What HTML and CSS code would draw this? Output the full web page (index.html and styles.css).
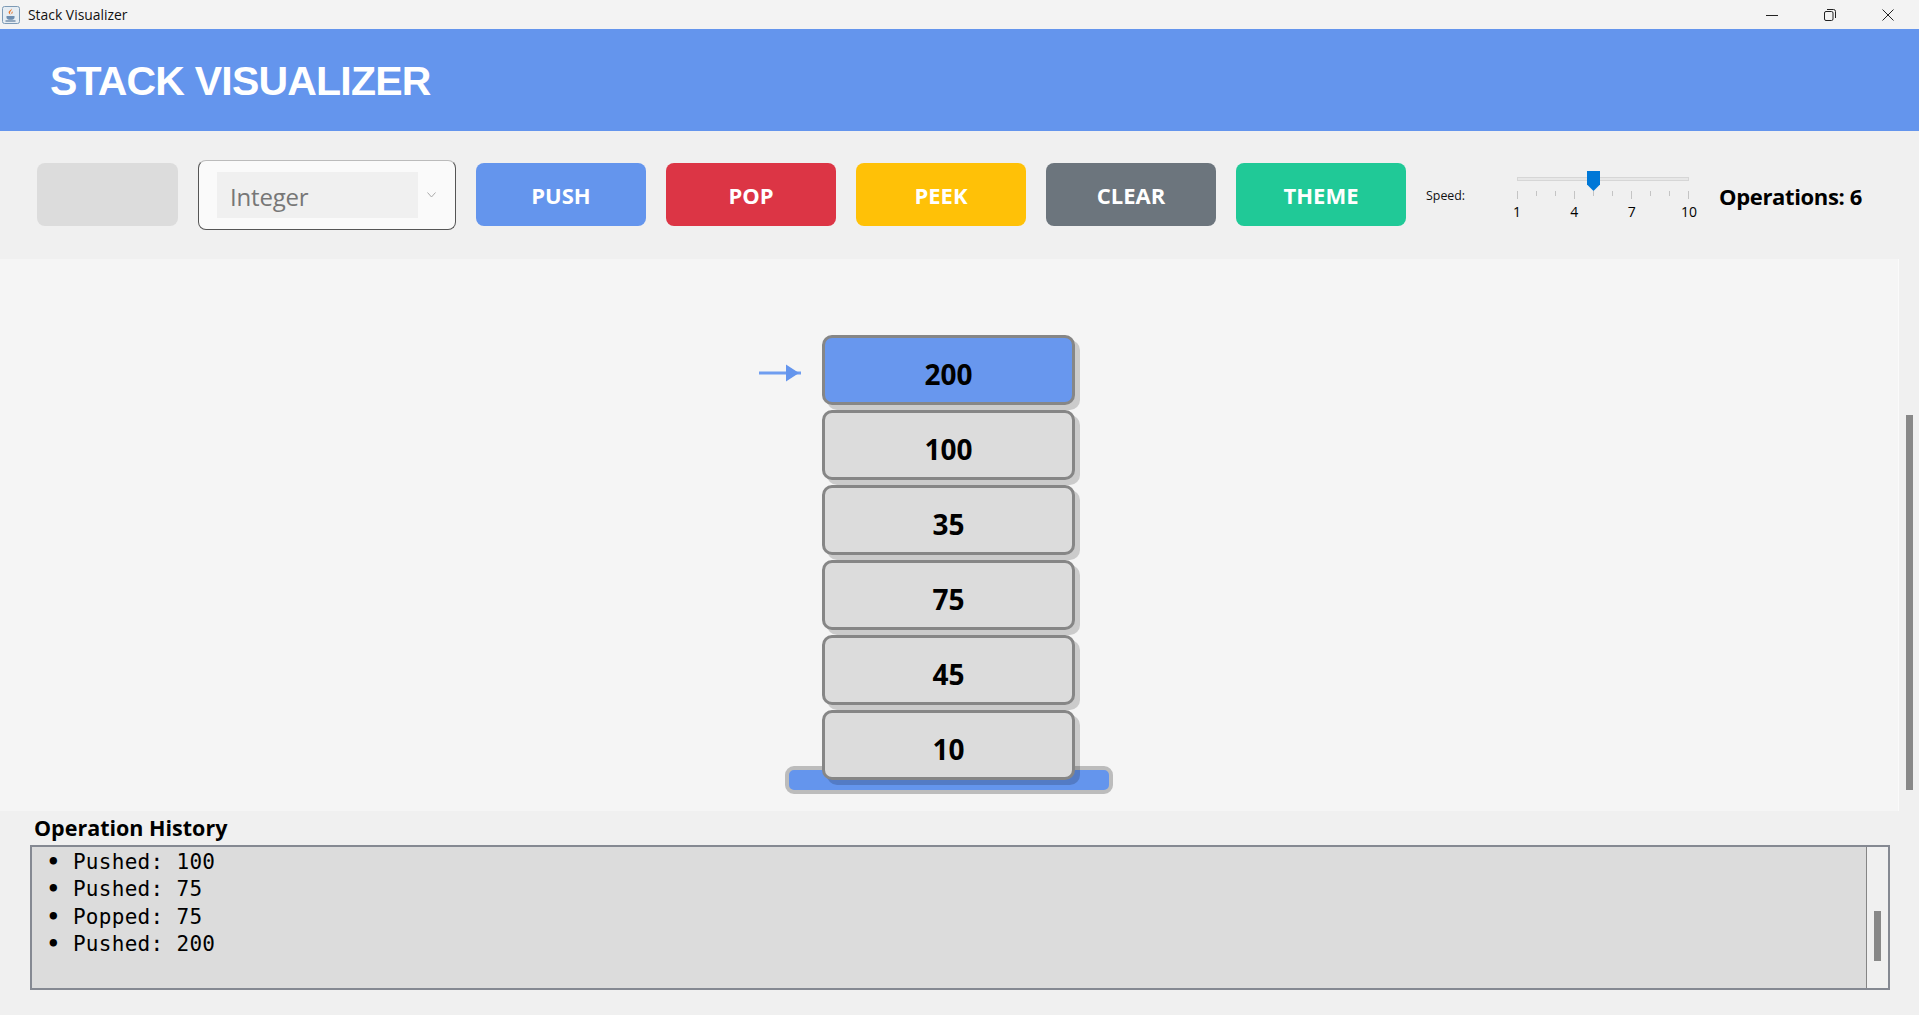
FILE: index.html
```html
<!DOCTYPE html>
<html>
<head>
    <title>Stack Visualizer</title>
    <link rel="stylesheet" href="styles.css">
</head>
<body>
    <div class="window">
        <div class="titlebar">
            <svg class="java-icon" width="18" height="18" viewBox="0 0 18 18">
                <rect x="0.5" y="0.5" width="17" height="17" rx="2" fill="#e6edf3" stroke="#7d9ab5"/>
                <path d="M9.5 2.5c1 2-2 3-1.5 5 .2.8 1 1.3 1 1.3-1.6-.5-2.8-1.6-2.3-3 .5-1.300 2.600-1.800 2.800-3.300z" fill="#e8762b"/>
                <path d="M11 5.500c-.8.700-1.500 1.200-1.200 2.300" fill="none" stroke="#e8762b"/>
                <path d="M4.500 10h8v1.500c0 1.500-1.500 2.300-4 2.300s-4-.8-4-2.300z" fill="#6d8db0"/>
                <path d="M3.500 15h10" stroke="#5a7a9c" stroke-width="1.200"/>
            </svg>
            <span class="window-title">Stack Visualizer</span>
            <div class="window-controls">
                <svg width="12" height="12" viewBox="0 0 12 12"><path d="M0 6.500h12" stroke="#222" stroke-width="1"/></svg>
                <svg width="12" height="12" viewBox="0 0 12 12"><rect x="0.500" y="2.500" width="8.500" height="9" rx="1.500" fill="none" stroke="#222"/><path d="M3 .5h6.500a2 2 0 0 1 2 2v6.500" fill="none" stroke="#222"/></svg>
                <svg width="12" height="12" viewBox="0 0 12 12"><path d="M.5 .5l11 11M11.500 .5l-11 11" stroke="#222"/></svg>
            </div>
        </div>

        <header class="app-header">
            <h1>STACK VISUALIZER</h1>
        </header>

        <div class="toolbar">
            <div class="value-input"></div>
            <div class="type-select">
                <div class="type-value">Integer</div>
                <svg class="chevron" width="9" height="6" viewBox="0 0 9 6"><path d="M.5 .5l4 4.500 4-4.500" fill="none" stroke="#aaa"/></svg>
            </div>
            <button class="btn btn-push" type="button">PUSH</button>
            <button class="btn btn-pop" type="button">POP</button>
            <button class="btn btn-peek" type="button">PEEK</button>
            <button class="btn btn-clear" type="button">CLEAR</button>
            <button class="btn btn-theme" type="button">THEME</button>
            <span class="speed-label">Speed:</span>
            <div class="slider">
                <div class="slider-track"></div>
                <svg class="slider-thumb" width="13" height="20" viewBox="0 0 13 20"><path d="M0 0h13v13.500l-6.500 6.500-6.500-6.500z" fill="#0078d7"/></svg>
                <div class="ticks">
                    <i class="major"></i><i></i><i></i><i class="major"></i><i></i><i></i><i class="major"></i><i></i><i></i><i class="major"></i>
                </div>
                <div class="tick-labels">
                    <span>1</span><span>4</span><span>7</span><span>10</span>
                </div>
            </div>
            <span class="op-count">Operations: 6</span>
        </div>

        <div class="middle">
            <div class="canvas">
                <div class="stack">
                    <div class="stack-item top">
                        <svg class="top-arrow" width="42" height="18" viewBox="0 0 42 18"><path d="M0 9h42" stroke="#6f9df0" stroke-width="3"/><path d="M27 0.500l13 8.500-13 8.500z" fill="#6495ed"/></svg>
                        200
                    </div>
                    <div class="stack-item">100</div>
                    <div class="stack-item">35</div>
                    <div class="stack-item">75</div>
                    <div class="stack-item">45</div>
                    <div class="stack-item">10</div>
                </div>
                <div class="stack-base"></div>
            </div>
            <div class="page-scroll">
                <div class="page-thumb"></div>
            </div>
        </div>

        <section class="history">
            <h2>Operation History</h2>
            <div class="history-box">
                <ul class="history-list">
                    <li><b>•</b> Pushed: 100</li>
                    <li><b>•</b> Pushed: 75</li>
                    <li><b>•</b> Popped: 75</li>
                    <li><b>•</b> Pushed: 200</li>
                </ul>
                <div class="history-scroll">
                    <div class="history-thumb"></div>
                </div>
            </div>
        </section>
    </div>
</body>
</html>
```

FILE: styles.css
```css
* {
    box-sizing: border-box;
}

body {
    margin: 0;
    background-color: #f0f0f0;
    font-family: "Open Sans", "Noto Sans", Arial, sans-serif;
    color: #000;
}

.window {
    display: flex;
    flex-direction: column;
    height: 1015px;
    overflow: hidden;
}

/* title bar */
.titlebar {
    display: flex;
    align-items: center;
    height: 29px;
    padding-left: 2px;
    background-color: #f3f3f3;
}

.window-title {
    margin-left: 8px;
    font-size: 13.9px;
    color: #111;
}

.window-controls {
    display: flex;
    gap: 46px;
    margin-left: auto;
    padding-right: 25px;
}

/* header */
.app-header {
    display: flex;
    align-items: center;
    height: 102px;
    padding: 2px 0 0 50px;
    background-color: #6495ed;
}

.app-header h1 {
    margin: 0;
    font-family: "Liberation Sans", Arial, sans-serif;
    font-size: 41px;
    font-weight: bold;
    letter-spacing: -0.8px;
    color: #fff;
}

/* toolbar */
.toolbar {
    display: flex;
    align-items: center;
    gap: 20px;
    height: 128px;
    padding: 0 0 1px 37px;
    background-color: #f0f0f0;
}

.value-input {
    width: 141px;
    height: 63px;
    border-radius: 8px;
    background-color: #dcdcdc;
}

.type-select {
    display: flex;
    align-items: center;
    width: 258px;
    height: 70px;
    padding-left: 18px;
    border: 1px solid #555;
    border-top-color: #bbb;
    border-radius: 8px;
    background-color: #fafafa;
}

.type-value {
    width: 201px;
    height: 46px;
    padding-left: 13px;
    background-color: #f0f0f0;
    font-size: 24px;
    letter-spacing: -0.2px;
    line-height: 50px;
    color: #777;
}

.chevron {
    margin-left: 9px;
}

.btn {
    width: 170px;
    height: 63px;
    border: none;
    border-radius: 8px;
    color: #fff;
    font-family: "Open Sans", "Noto Sans", Arial, sans-serif;
    font-size: 22px;
    font-weight: bold;
}

.btn-push { background-color: #6495ed; }
.btn-pop { background-color: #dc3545; }
.btn-peek { background-color: #ffc107; }
.btn-clear { background-color: #6c757d; }
.btn-theme { background-color: #20c997; }

.speed-label {
    width: 71px;
    margin-top: 1px;
    font-size: 12.4px;
    color: #111;
}

.slider {
    position: relative;
    width: 172px;
    height: 58px;
}

.slider-track {
    height: 4px;
    margin-top: 11px;
    border: 1px solid #d6d6d6;
    background-color: #e7e7e7;
}

.slider-thumb {
    position: absolute;
    top: 5px;
    left: 70px;
}

.ticks {
    display: flex;
    justify-content: space-between;
    align-items: flex-start;
    height: 8px;
    margin-top: 10px;
}

.ticks i {
    width: 1px;
    height: 5px;
    background-color: #c4c4c4;
}

.ticks i.major {
    height: 8px;
}

.tick-labels {
    display: flex;
    justify-content: space-between;
    margin: 3px -10px 0;
    font-size: 14px;
    line-height: 20px;
}

.tick-labels span {
    width: 20px;
    text-align: center;
}

.op-count {
    margin: 2px 0 0 10px;
    font-size: 22px;
    font-weight: bold;
    letter-spacing: -0.35px;
}

/* stack */
.middle {
    display: flex;
    height: 552px;
}

.canvas {
    width: 1899px;
    padding: 76px 1px 0 0;
    border-right: 1px solid #fafafa;
    background-color: #f5f5f5;
}

.stack {
    position: relative;
    z-index: 1;
    display: flex;
    flex-direction: column;
    gap: 5px;
    width: 253px;
    margin: 0 auto;
}

.stack-item {
    position: relative;
    height: 70px;
    padding-top: 17px;
    border: 3px solid #868686;
    border-radius: 10px;
    background-color: #dcdcdc;
    box-shadow: 5px 5px 0 rgba(0, 0, 0, 0.17);
    font-family: "Noto Sans", "Open Sans", Arial, sans-serif;
    font-size: 28px;
    font-weight: bold;
    line-height: 38px;
    text-align: center;
}

.stack-item.top {
    background-color: #6897ee;
}

.top-arrow {
    position: absolute;
    top: 26px;
    left: -66px;
}

.stack-base {
    width: 328px;
    height: 28px;
    margin: -14px auto 0;
    border: 4px solid #bcbcbc;
    border-radius: 9px;
    background-color: #6495ed;
}

.page-scroll {
    flex: 1;
    padding: 156px 6px 0 7px;
    background-color: #f0f0f0;
}

.page-thumb {
    height: 375px;
    background-color: #888;
}

/* history */
.history {
    flex: 1;
    padding: 2px 29px 25px 30px;
    background-color: #f0f0f0;
}

.history h2 {
    margin: 0 0 3px 4px;
    font-size: 21.5px;
    font-weight: bold;
    line-height: 29px;
}

.history-box {
    display: flex;
    height: 145px;
    border: 2px solid #858992;
    background-color: #dcdcdc;
}

.history-list {
    flex: 1;
    margin: 0;
    padding: 2px 0 0 15px;
    list-style: none;
    font-family: "DejaVu Sans Mono", monospace;
    font-size: 21px;
    line-height: 27.3px;
    letter-spacing: 0.3px;
}

.history-scroll {
    width: 22px;
    padding: 64px 7px 0 7px;
    border-left: 1px solid #858585;
    background-color: #f0f0f0;
}

.history-thumb {
    height: 50px;
    background-color: #888;
}
```
